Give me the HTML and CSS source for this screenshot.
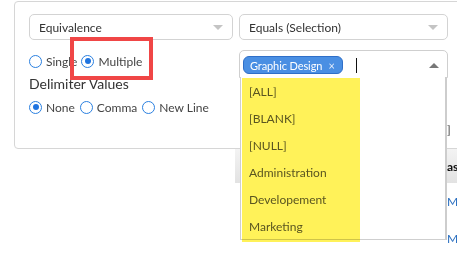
FILE: index.html
```html
<!DOCTYPE html>
<html>
<head>
<meta charset="utf-8">
<link rel="stylesheet" href="styles.css">
</head>
<body>
<div class="page">
  <div class="panel">
    <div class="col-left">
      <div class="select"><span>Equivalence</span><span class="caret-down"></span></div>
      <div class="radio-row r1">
        <label class="radio"><span class="dot"></span>Single</label>
        <label class="radio on"><span class="dot"></span>Multiple</label>
      </div>
      <div class="label">Delimiter Values</div>
      <div class="radio-row r2">
        <label class="radio on"><span class="dot"></span>None</label>
        <label class="radio"><span class="dot"></span>Comma</label>
        <label class="radio"><span class="dot"></span>New Line</label>
      </div>
    </div>
    <div class="col-right">
      <div class="select"><span>Equals (Selection)</span><span class="caret-down"></span></div>
      <div class="multi">
        <span class="pill"><span class="pill-text">Graphic Design</span><span class="x">×</span></span>
        <span class="cursor"></span>
        <span class="caret-up"></span>
      </div>
      <div class="bracket">]</div>
    </div>
  </div>
  <div class="table">
    <div class="thead"><span class="th">as</span></div>
    <div class="trow"><span class="td">M</span></div>
    <div class="trow"><span class="td">M</span></div>
  </div>

  <div class="dropdown">
    <div class="item">[ALL]</div>
    <div class="item">[BLANK]</div>
    <div class="item">[NULL]</div>
    <div class="item">Administration</div>
    <div class="item">Developement</div>
    <div class="item">Marketing</div>
  </div>
  <div class="highlight"></div>
  <div class="redbox"></div>
</div>
</body>
</html>
```

FILE: styles.css
```css
html, body {
  margin: 0;
  padding: 0;
  background: #fff;
  overflow: hidden;
}
body {
  width: 457px;
  height: 267px;
  font-family: Lato, "Open Sans", sans-serif;
  font-size: 12px;
  color: #333;
}
.page {
  position: relative;
  width: 457px;
  height: 267px;
  overflow: hidden;
}
.panel {
  margin: 1px 0 0 14px;
  width: 520px;
  height: 146px;
  border: 1px solid #d6d6d6;
  border-radius: 4px 0 0 4px;
  box-sizing: content-box;
  display: flex;
  gap: 6px;
}
.col-left {
  margin: 12px 0 0 14px;
  width: 204px;
  display: flex;
  flex-direction: column;
}
.col-right {
  margin-top: 12px;
  width: 212px;
  display: flex;
  flex-direction: column;
}
.select {
  box-sizing: border-box;
  height: 26px;
  border: 1px solid #d3d3d3;
  border-radius: 5px;
  display: flex;
  align-items: center;
  justify-content: space-between;
  padding: 0 9px 0 9px;
  color: #333;
}
.col-right .select {
  width: 209px;
}
.caret-down {
  width: 0;
  height: 0;
  border-left: 5px solid transparent;
  border-right: 5px solid transparent;
  border-top: 5px solid #c4c4c4;
}
.radio-row {
  display: flex;
  align-items: center;
  height: 16px;
  color: #444;
}
.r1 { margin-top: 13px; gap: 4px; }
.r2 { margin-top: 6px; gap: 5px; }
.radio {
  display: flex;
  align-items: center;
  gap: 4px;
}
.dot {
  box-sizing: border-box;
  width: 13px;
  height: 13px;
  border: 1.5px solid #2a7fe0;
  border-radius: 50%;
  display: flex;
  align-items: center;
  justify-content: center;
}
.radio.on .dot::after {
  content: "";
  width: 6px;
  height: 6px;
  border-radius: 50%;
  background: #1f74e0;
}
.label {
  margin-top: 6px;
  font-size: 14px;
  line-height: 18px;
  color: #333;
}
.multi {
  box-sizing: border-box;
  margin-top: 10px;
  width: 209px;
  height: 28px;
  border: 1px solid #cfcfcf;
  border-radius: 5px 5px 0 0;
  display: flex;
  align-items: center;
  padding-left: 3px;
  padding-right: 8px;
}
.pill {
  box-sizing: border-box;
  height: 18px;
  width: 100px;
  margin-top: 2px;
  background: #4a8fe3;
  border: 1px solid #2f6fc8;
  border-radius: 6px;
  color: #fff;
  font-size: 11px;
  display: flex;
  align-items: center;
  padding: 0 7px 0 6px;
  white-space: nowrap;
}
.pill-text {
  letter-spacing: -0.1px;
}
.pill .x {
  margin-left: auto;
  font-size: 11px;
  color: #e6eefb;
}
.cursor {
  width: 1px;
  height: 15px;
  background: #111;
  margin-left: 13px;
  margin-top: 2px;
}
.caret-up {
  margin-left: auto;
  margin-top: 2px;
  width: 0;
  height: 0;
  border-left: 5px solid transparent;
  border-right: 5px solid transparent;
  border-bottom: 5px solid #777;
}
.bracket {
  align-self: flex-end;
  margin-top: 46px;
  width: 4px;
  font-size: 12px;
  line-height: 12px;
  color: #444;
}
.table {
  margin-left: 235px;
  width: 300px;
}
.thead {
  height: 34px;
  background: linear-gradient(#f3f3f3, #e2e2e2);
  display: flex;
  align-items: center;
}
.th {
  margin-left: 212px;
  font-weight: bold;
  color: #111;
}
.trow {
  height: 37px;
  display: flex;
  align-items: center;
}
.td {
  margin-left: 212px;
  color: #2a6fc0;
}
.dropdown {
  position: absolute;
  left: 240px;
  top: 77px;
  width: 207px;
  height: 163px;
  box-sizing: border-box;
  background: #fff;
  border: 1px solid #cfcfcf;
  border-right: 2px solid #cdcdcd;
  border-top: none;
  padding-top: 1px;
  color: #5a5a5a;
}
.item {
  height: 27px;
  line-height: 27px;
  padding-left: 8px;
}
.highlight {
  position: absolute;
  left: 242px;
  top: 78px;
  width: 118px;
  height: 164px;
  background: rgba(255, 240, 60, 0.85);
  mix-blend-mode: multiply;
}
.redbox {
  position: absolute;
  left: 70px;
  top: 37px;
  width: 83px;
  height: 43px;
  box-sizing: border-box;
  border: 4px solid #f04646;
}
```
